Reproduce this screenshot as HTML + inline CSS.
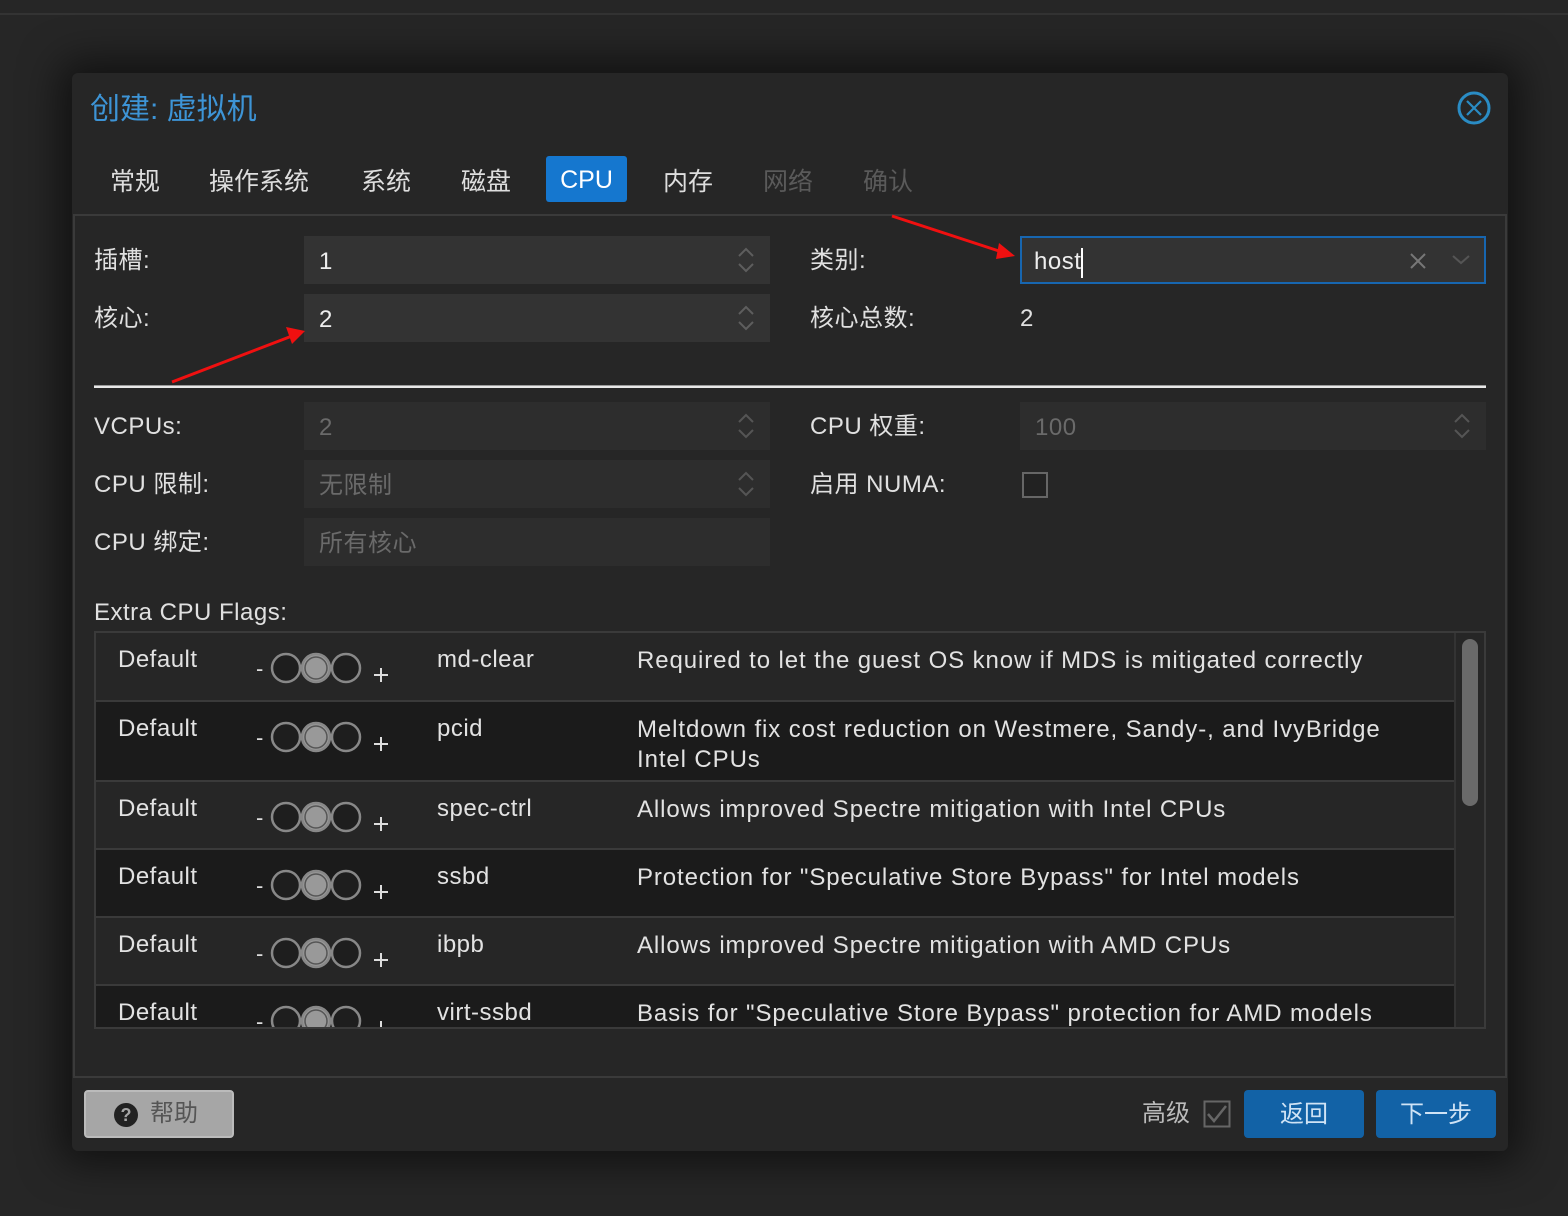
<!DOCTYPE html>
<html><head><meta charset="utf-8">
<style>
*{margin:0;padding:0;box-sizing:border-box}
html,body{width:1568px;height:1216px;background:#262626;overflow:hidden;font-family:"Liberation Sans","Noto Sans CJK SC",sans-serif;color:#e2e2e2;font-size:24px;letter-spacing:0.5px}
.abs{position:absolute}
.topline{left:0;top:13px;width:1568px;height:2px;background:#333}
.dlg{left:72px;top:73px;width:1436px;height:1078px;background:#262626;border-radius:6px;box-shadow:0 0 40px 12px rgba(0,0,0,.55)}
.title{left:90px;top:95px;color:#3d94d6;font-size:30px;line-height:30px;letter-spacing:0}
.tab{top:169px;font-size:25px;color:#dedede;line-height:26px;letter-spacing:0}
.tab.dis{color:#5a5a5a}
.tabsel{left:546px;top:156px;width:81px;height:46px;background:#1577cf;border-radius:3px;color:#fff;font-size:25px;text-align:center;line-height:48px;letter-spacing:0}
.body{left:73px;top:214px;width:1434px;height:864px;border:2px solid #3a3a3a}
.lbl{font-size:24px;color:#e0e0e0;line-height:24px}
.inp{height:48px;background:#333;color:#eee;padding-left:15px;line-height:52px;font-size:24px}
.inp.d{background:#2d2d2d;color:#6a6a6a}
.spin{position:absolute;right:14px;top:8px}
.grid{left:94px;top:631px;width:1392px;height:398px;border:2px solid #3a3a3a;overflow:hidden;background:#262626}
.row{position:absolute;left:0;width:1358px;border-bottom:2px solid #3a3a3a}
.row div{position:absolute}
.c1{left:22px;top:13px}
.c3{left:341px;top:13px}
.c4{left:541px;top:13px;line-height:30px;width:800px;letter-spacing:0.9px}
.btn{border-radius:4px;text-align:center;color:#cfe3f5;font-size:24px;letter-spacing:0}
</style></head><body>
<div class="abs topline"></div>
<div class="abs dlg"></div>
<div class="abs title">创建: 虚拟机</div>
<svg class="abs" style="left:1456px;top:90px" width="36" height="36"><circle cx="18" cy="18" r="15" fill="none" stroke="#2a8cc4" stroke-width="3"/><path d="M11 11L25 25M25 11L11 25" stroke="#2a8cc4" stroke-width="2.2"/></svg>
<div class="abs tab" style="left:110px">常规</div>
<div class="abs tab" style="left:209px">操作系统</div>
<div class="abs tab" style="left:361px">系统</div>
<div class="abs tab" style="left:461px">磁盘</div>
<div class="abs tabsel">CPU</div>
<div class="abs tab" style="left:663px">内存</div>
<div class="abs tab dis" style="left:763px">网络</div>
<div class="abs tab dis" style="left:863px">确认</div>
<div class="abs body"></div>

<div class="abs lbl" style="left:94px;top:249px">插槽:</div>
<div class="abs inp" style="left:304px;top:236px;width:466px">1<svg class="spin" width="20" height="32"><path d="M3 12L10 5L17 12M3 20L10 27L17 20" fill="none" stroke="#5e5e5e" stroke-width="2"/></svg></div>
<div class="abs lbl" style="left:94px;top:307px">核心:</div>
<div class="abs inp" style="left:304px;top:294px;width:466px">2<svg class="spin" width="20" height="32"><path d="M3 12L10 5L17 12M3 20L10 27L17 20" fill="none" stroke="#5e5e5e" stroke-width="2"/></svg></div>
<div class="abs lbl" style="left:810px;top:249px">类别:</div>
<div class="abs inp" style="left:1020px;top:236px;width:466px;border:2px solid #1766b0;padding-left:12px;line-height:48px">host<span style="display:inline-block;width:2px;height:30px;background:#fff;vertical-align:middle"></span>
<svg class="abs" style="left:386px;top:13px" width="20" height="20"><path d="M3 3L17 17M17 3L3 17" stroke="#777" stroke-width="2"/></svg>
<svg class="abs" style="left:428px;top:14px" width="22" height="16"><path d="M3 4L11 11L19 4" fill="none" stroke="#555" stroke-width="2"/></svg></div>
<div class="abs lbl" style="left:810px;top:307px">核心总数:</div>
<div class="abs lbl" style="left:1020px;top:307px">2</div>

<div class="abs" style="left:94px;top:385px;width:1392px;height:1px;background:#999"></div>
<div class="abs" style="left:94px;top:386px;width:1392px;height:2px;background:#e8e8e8"></div>

<div class="abs lbl" style="left:94px;top:415px">VCPUs:</div>
<div class="abs inp d" style="left:304px;top:402px;width:466px">2<svg class="spin" width="20" height="32"><path d="M3 12L10 5L17 12M3 20L10 27L17 20" fill="none" stroke="#555" stroke-width="2"/></svg></div>
<div class="abs lbl" style="left:94px;top:473px">CPU 限制:</div>
<div class="abs inp d" style="left:304px;top:460px;width:466px">无限制<svg class="spin" width="20" height="32"><path d="M3 12L10 5L17 12M3 20L10 27L17 20" fill="none" stroke="#555" stroke-width="2"/></svg></div>
<div class="abs lbl" style="left:94px;top:531px">CPU 绑定:</div>
<div class="abs inp d" style="left:304px;top:518px;width:466px">所有核心</div>
<div class="abs lbl" style="left:810px;top:415px">CPU 权重:</div>
<div class="abs inp d" style="left:1020px;top:402px;width:466px">100<svg class="spin" width="20" height="32"><path d="M3 12L10 5L17 12M3 20L10 27L17 20" fill="none" stroke="#555" stroke-width="2"/></svg></div>
<div class="abs lbl" style="left:810px;top:473px">启用 NUMA:</div>
<div class="abs" style="left:1022px;top:472px;width:26px;height:26px;border:2px solid #666;background:#222"></div>

<div class="abs lbl" style="left:94px;top:601px">Extra CPU Flags:</div>
<div class="abs grid">
<svg width="0" height="0" style="position:absolute"><defs><g id="t"><text x="0" y="32" fill="#ddd" font-size="22" font-family="Liberation Sans">-</text><circle cx="30" cy="24" r="14" fill="#1e1e1e" stroke="#888" stroke-width="2.5"/><circle cx="60" cy="24" r="14" fill="#999" stroke="#888" stroke-width="2.5"/><circle cx="60" cy="24" r="11" fill="#999" stroke="#555" stroke-width="1.5"/><circle cx="90" cy="24" r="14" fill="#1e1e1e" stroke="#888" stroke-width="2.5"/><path d="M118 31H132M125 24V38" stroke="#ddd" stroke-width="2"/></g></defs></svg>
<div class="row" style="top:0;height:69px;background:#262626"><div class="c1">Default</div><svg width="140" height="44" style="position:absolute;left:160px;top:11px"><use href="#t"/></svg><div class="c3">md-clear</div><div class="c4">Required to let the guest OS know if MDS is mitigated correctly</div></div>
<div class="row" style="top:69px;height:80px;background:#1b1b1b"><div class="c1">Default</div><svg width="140" height="44" style="position:absolute;left:160px;top:11px"><use href="#t"/></svg><div class="c3">pcid</div><div class="c4">Meltdown fix cost reduction on Westmere, Sandy-, and IvyBridge<br>Intel CPUs</div></div>
<div class="row" style="top:149px;height:68px;background:#262626"><div class="c1">Default</div><svg width="140" height="44" style="position:absolute;left:160px;top:11px"><use href="#t"/></svg><div class="c3">spec-ctrl</div><div class="c4">Allows improved Spectre mitigation with Intel CPUs</div></div>
<div class="row" style="top:217px;height:68px;background:#1b1b1b"><div class="c1">Default</div><svg width="140" height="44" style="position:absolute;left:160px;top:11px"><use href="#t"/></svg><div class="c3">ssbd</div><div class="c4">Protection for "Speculative Store Bypass" for Intel models</div></div>
<div class="row" style="top:285px;height:68px;background:#262626"><div class="c1">Default</div><svg width="140" height="44" style="position:absolute;left:160px;top:11px"><use href="#t"/></svg><div class="c3">ibpb</div><div class="c4">Allows improved Spectre mitigation with AMD CPUs</div></div>
<div class="row" style="top:353px;height:68px;background:#1b1b1b;border:none"><div class="c1">Default</div><svg width="140" height="44" style="position:absolute;left:160px;top:11px"><use href="#t"/></svg><div class="c3">virt-ssbd</div><div class="c4">Basis for "Speculative Store Bypass" protection for AMD models</div></div>
<div style="position:absolute;left:1358px;top:0;width:30px;height:398px;background:#262626;border-left:2px solid #333"></div>
<div style="position:absolute;left:1366px;top:6px;width:16px;height:167px;background:#6a6a6a;border-radius:8px"></div>
</div>

<div class="abs btn" style="left:84px;top:1090px;width:150px;height:48px;background:#a6a6a6;border:2px solid #bbb;color:#555;line-height:44px;text-align:left;padding-left:28px"><span style="display:inline-block;width:24px;height:24px;border-radius:50%;background:#222;color:#a6a6a6;font-size:18px;font-weight:bold;line-height:24px;text-align:center;vertical-align:middle;margin-right:12px">?</span>帮助</div>
<div class="abs lbl" style="left:1142px;top:1102px;color:#bbb;letter-spacing:0">高级</div>
<svg class="abs" style="left:1203px;top:1100px" width="28" height="28"><rect x="1.5" y="1.5" width="25" height="25" fill="none" stroke="#666" stroke-width="2"/><path d="M5 14L11 21L23 6" fill="none" stroke="#666" stroke-width="2.5"/></svg>
<div class="abs btn" style="left:1244px;top:1090px;width:120px;height:48px;background:#1262a6;line-height:50px">返回</div>
<div class="abs btn" style="left:1376px;top:1090px;width:120px;height:48px;background:#1262a6;line-height:50px">下一步</div>

<svg class="abs" style="left:0;top:0" width="1568" height="1216">
<path d="M172 382L292 336" stroke="#f01010" stroke-width="3"/><path d="M305 331L286 327L292 344Z" fill="#f01010"/>
<path d="M892 216L1002 252" stroke="#f01010" stroke-width="3"/><path d="M1015 256L999 243L996 259Z" fill="#f01010"/>
</svg>
</body></html>
